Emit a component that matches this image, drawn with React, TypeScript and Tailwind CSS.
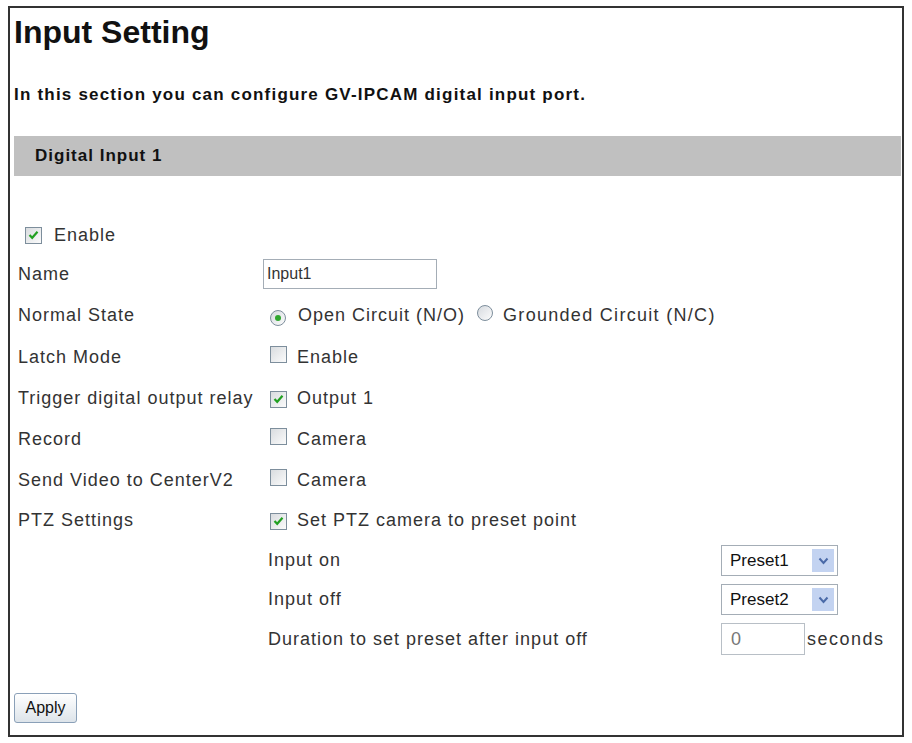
import React from 'react';

const font = { fontFamily: '"Liberation Sans", Arial, sans-serif' };

function Check({ checked }: { checked?: boolean }) {
  return (
    <span className="inline-flex h-[17px] w-[17px] shrink-0 items-center justify-center border border-[#7d8e9c] bg-gradient-to-br from-[#d9dcdf] to-[#fbfbfb]">
      {checked && (
        <svg width="11" height="10" viewBox="0 0 11 10">
          <path d="M1.5 5 L4.2 7.8 L9.5 1.8" fill="none" stroke="#22a022" strokeWidth="2.2" />
        </svg>
      )}
    </span>
  );
}

function Radio({ checked }: { checked?: boolean }) {
  return (
    <span className="inline-flex h-[16px] w-[16px] shrink-0 items-center justify-center rounded-full border border-[#7d8e9c] bg-gradient-to-br from-[#d6dadf] to-[#fcfcfc]">
      {checked && <span className="h-[6px] w-[6px] rounded-full bg-[#2fa62f]" />}
    </span>
  );
}

function Select({ value }: { value: string }) {
  return (
    <div className="flex h-[31px] w-[117px] items-center justify-between border border-[#a4adb6] bg-white pl-[8px] pr-[3px]">
      <span className="text-[17px] tracking-normal text-[#111]">{value}</span>
      <span className="flex h-[23px] w-[22px] items-center justify-center bg-[#c3d3f1]">
        <svg width="11" height="8" viewBox="0 0 11 8">
          <path d="M1.5 1.5 L5.5 6 L9.5 1.5" fill="none" stroke="#4a6aa8" strokeWidth="2" />
        </svg>
      </span>
    </div>
  );
}

function Row({ label, h, children }: { label: string; h: string; children?: React.ReactNode }) {
  return (
    <div className={`grid grid-cols-[249px_1fr] items-center ${h}`}>
      <span className="pl-[4px]">{label}</span>
      <div className="flex items-center">{children}</div>
    </div>
  );
}

export default function App() {
  return (
    <div className="h-[743px] w-[912px] bg-white pl-[8px] pt-[6px]" style={font}>
      <div className="h-[731px] w-[896px] border-2 border-[#333] pl-[4px] pr-[1px]">
        <h1 className="pt-[4px] text-[32px] font-bold leading-[40px] text-[#111]">Input Setting</h1>
        <p className="mt-[32px] text-[17px] font-bold leading-[22px] tracking-[1.2px] text-[#111]">
          In this section you can configure GV-IPCAM digital input port.
        </p>
        <div className="mt-[30px] flex h-[40px] items-center bg-[#c0c0c0] pl-[21px] text-[17px] font-bold tracking-[1px] text-[#111]">
          Digital Input 1
        </div>

        <div className="mt-[40px] text-[18px] tracking-[1px] text-[#333]">
          <div className="flex h-[38px] items-center gap-[12px] pl-[11px]">
            <Check checked />
            <span>Enable</span>
          </div>
          <Row label="Name" h="h-[40px]">
            <div className="flex h-[30px] w-[174px] items-center border border-[#a4adb6] pl-[3px] text-[16px] tracking-normal">
              Input1
            </div>
          </Row>
          <Row label="Normal State" h="h-[43px]">
            <span className="ml-[7px]"><Radio checked /></span>
            <span className="ml-[12px]">Open Circuit (N/O)</span>
            <span className="ml-[12px]"><Radio /></span>
            <span className="ml-[10px] tracking-[1.3px]">Grounded Circuit (N/C)</span>
          </Row>
          <Row label="Latch Mode" h="h-[41px]">
            <span className="ml-[7px]"><Check /></span>
            <span className="ml-[10px]">Enable</span>
          </Row>
          <Row label="Trigger digital output relay" h="h-[41px]">
            <span className="ml-[7px]"><Check checked /></span>
            <span className="ml-[10px]">Output 1</span>
          </Row>
          <Row label="Record" h="h-[41px]">
            <span className="ml-[7px]"><Check /></span>
            <span className="ml-[10px]">Camera</span>
          </Row>
          <Row label="Send Video to CenterV2" h="h-[40px]">
            <span className="ml-[7px]"><Check /></span>
            <span className="ml-[10px]">Camera</span>
          </Row>
          <Row label="PTZ Settings" h="h-[41px]">
            <span className="ml-[7px]"><Check checked /></span>
            <span className="ml-[10px]">Set PTZ camera to preset point</span>
          </Row>
          <Row label="" h="h-[39px]">
            <div className="grid w-full grid-cols-[453px_1fr] items-center pl-[5px]">
              <span>Input on</span>
              <Select value="Preset1" />
            </div>
          </Row>
          <Row label="" h="h-[39px]">
            <div className="grid w-full grid-cols-[453px_1fr] items-center pl-[5px]">
              <span>Input off</span>
              <Select value="Preset2" />
            </div>
          </Row>
          <Row label="" h="h-[40px]">
            <div className="grid w-full grid-cols-[453px_1fr] items-center pl-[5px]">
              <span>Duration to set preset after input off</span>
              <div className="flex items-center">
                <div className="flex h-[32px] w-[84px] items-center border border-[#b8bfc6] pl-[9px] text-[#777]">0</div>
                <span className="ml-[2px] tracking-[1.5px]">seconds</span>
              </div>
            </div>
          </Row>
        </div>

        <button className="mt-[34px] h-[30px] w-[63px] rounded-[3px] border border-[#8aa0b8] bg-gradient-to-b from-[#ffffff] to-[#dde4ea] text-[16px] text-[#111]">
          Apply
        </button>
      </div>
    </div>
  );
}
